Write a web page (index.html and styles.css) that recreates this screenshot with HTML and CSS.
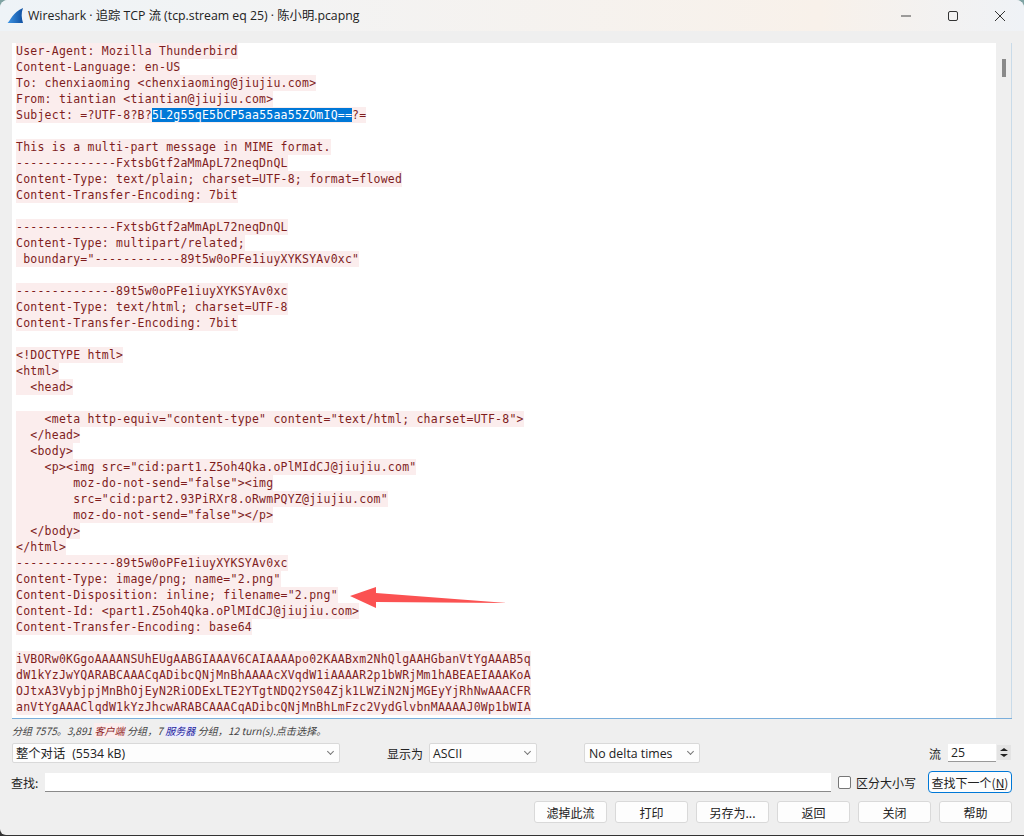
FILE: index.html
```html
<!DOCTYPE html>
<html lang="zh-CN">

<head>
    <meta charset="UTF-8">
    <title>Wireshark · 追踪 TCP 流 (tcp.stream eq 25) · 陈小明.pcapng</title>
    <link rel="stylesheet" href="styles.css">
</head>

<body>
    <div class="window">
        <div class="titlebar">
            <svg class="logo" width="16" height="15" viewBox="0 0 16 15">
                <defs>
                    <linearGradient id="fin" x1="0" y1="0" x2="1" y2="0">
                        <stop offset="0" stop-color="#3f96e6" />
                        <stop offset="1" stop-color="#0e4fa0" />
                    </linearGradient>
                </defs>
                <path d="M0.500 15C3 13 6 4 16 0C14 5 14.500 10 16 15Z" fill="url(#fin)" />
            </svg>
            <span class="title">Wireshark · 追踪 TCP 流 (tcp.stream eq 25) · 陈小明.pcapng</span>
            <div class="win-btns">
                <svg width="12" height="12" viewBox="0 0 12 12"><path d="M1 6H11" stroke="#444" /></svg>
                <svg width="12" height="12" viewBox="0 0 12 12"><rect x="1.500" y="1.500" width="9" height="9" rx="1.500" fill="none" stroke="#333" /></svg>
                <svg width="12" height="12" viewBox="0 0 12 12"><path d="M1 1L11 11M11 1L1 11" stroke="#333" /></svg>
            </div>
        </div>

        <div class="stream">
            <div class="text">
                <div><span>User-Agent: Mozilla Thunderbird</span></div>
                <div><span>Content-Language: en-US</span></div>
                <div><span>To: chenxiaoming &lt;chenxiaoming@jiujiu.com&gt;</span></div>
                <div><span>From: tiantian &lt;tiantian@jiujiu.com&gt;</span></div>
                <div><span>Subject: =?UTF-8?B?<em>5L2g55qE5bCP5aa55aa55ZOmIQ==</em>?=</span></div>
                <div></div>
                <div><span>This is a multi-part message in MIME format.</span></div>
                <div><span>--------------FxtsbGtf2aMmApL72neqDnQL</span></div>
                <div><span>Content-Type: text/plain; charset=UTF-8; format=flowed</span></div>
                <div><span>Content-Transfer-Encoding: 7bit</span></div>
                <div></div>
                <div><span>--------------FxtsbGtf2aMmApL72neqDnQL</span></div>
                <div><span>Content-Type: multipart/related;</span></div>
                <div><span> boundary="------------89t5w0oPFe1iuyXYKSYAv0xc"</span></div>
                <div></div>
                <div><span>--------------89t5w0oPFe1iuyXYKSYAv0xc</span></div>
                <div><span>Content-Type: text/html; charset=UTF-8</span></div>
                <div><span>Content-Transfer-Encoding: 7bit</span></div>
                <div></div>
                <div><span>&lt;!DOCTYPE html&gt;</span></div>
                <div><span>&lt;html&gt;</span></div>
                <div><span>  &lt;head&gt;</span></div>
                <div></div>
                <div><span>    &lt;meta http-equiv="content-type" content="text/html; charset=UTF-8"&gt;</span></div>
                <div><span>  &lt;/head&gt;</span></div>
                <div><span>  &lt;body&gt;</span></div>
                <div><span>    &lt;p&gt;&lt;img src="cid:part1.Z5oh4Qka.oPlMIdCJ@jiujiu.com"</span></div>
                <div><span>        moz-do-not-send="false"&gt;&lt;img</span></div>
                <div><span>        src="cid:part2.93PiRXr8.oRwmPQYZ@jiujiu.com"</span></div>
                <div><span>        moz-do-not-send="false"&gt;&lt;/p&gt;</span></div>
                <div><span>  &lt;/body&gt;</span></div>
                <div><span>&lt;/html&gt;</span></div>
                <div><span>--------------89t5w0oPFe1iuyXYKSYAv0xc</span></div>
                <div><span>Content-Type: image/png; name="2.png"</span></div>
                <div><span>Content-Disposition: inline; filename="2.png"</span></div>
                <div><span>Content-Id: &lt;part1.Z5oh4Qka.oPlMIdCJ@jiujiu.com&gt;</span></div>
                <div><span>Content-Transfer-Encoding: base64</span></div>
                <div></div>
                <div><span>iVBORw0KGgoAAAANSUhEUgAABGIAAAV6CAIAAAApo02KAABxm2NhQlgAAHGbanVtYgAAAB5q</span></div>
                <div><span>dW1kYzJwYQARABCAAACqADibcQNjMnBhAAAAcXVqdW1iAAAAR2p1bWRjMm1hABEAEIAAAKoA</span></div>
                <div><span>OJtxA3VybjpjMnBhOjEyN2RiODExLTE2YTgtNDQ2YS04Zjk1LWZiN2NjMGEyYjRhNwAAACFR</span></div>
                <div><span>anVtYgAAAClqdW1kYzJhcwARABCAAACqADibcQNjMnBhLmFzc2VydGlvbnMAAAAJ0Wp1bWIA</span></div>
            </div>
            <div class="scrollbar">
                <div class="thumb"></div>
            </div>
        </div>

        <div class="info">分组 7575。3,891 <b class="client">客户端</b> 分组，7 <b class="server">服务器</b> 分组，12 turn(s).点击选择。</div>

        <div class="row row-show">
            <div class="select select-conv">整个对话<span class="size">(5534 kB)</span><i class="caret"></i></div>
            <label class="label-show">显示为</label>
            <div class="select select-ascii">ASCII<i class="caret"></i></div>
            <div class="select select-delta">No delta times<i class="caret"></i></div>
            <label class="label-stream">流</label>
            <div class="spin">
                <div class="spin-val">25</div>
                <div class="spin-btns">
                    <div class="up"></div>
                    <div class="down"></div>
                </div>
            </div>
        </div>

        <div class="row row-find">
            <label>查找:</label>
            <div class="find-input"></div>
            <div class="check"></div>
            <label class="label-case">区分大小写</label>
            <button class="btn btn-next" type="button">查找下一个(<u>N</u>)</button>
        </div>

        <div class="row row-actions">
            <button class="btn" type="button">滤掉此流</button>
            <button class="btn" type="button">打印</button>
            <button class="btn" type="button">另存为...</button>
            <button class="btn" type="button">返回</button>
            <button class="btn" type="button">关闭</button>
            <button class="btn" type="button">帮助</button>
        </div>

        <svg class="arrow" width="160" height="24" viewBox="0 0 160 24">
            <path d="M0 10L26 1L26 7L157 17L26 16L26 22Z" fill="#fb5252" />
        </svg>
    </div>
</body>

</html>
```

FILE: styles.css
```css
* {
    box-sizing: border-box;
}

html,
body {
    margin: 0;
    height: 100%;
}

body {
    background: linear-gradient(#7fa3a3 0, #7fa3a3 40px, #333 800px);
    font-family: "Noto Sans CJK SC", "Open Sans", sans-serif;
    font-size: 12px;
    color: #222;
    overflow: hidden;
}

.window {
    position: relative;
    width: 1024px;
    height: 835px;
    background-color: #efefef;
    border-radius: 8px 8px 0 6px;
    overflow: hidden;
    display: flex;
    flex-direction: column;
}

.titlebar {
    height: 31px;
    flex: none;
    display: flex;
    align-items: center;
    padding-left: 7px;
    background: linear-gradient(90deg, #eef3f7 0%, #f3f3f3 30%, #f8f1ea 80%, #eff2f6 100%);

    .logo {
        margin-right: 5px;
    }

    .title {
        position: relative;
        top: -1px;
        font-family: "Open Sans", "Noto Sans CJK SC", sans-serif;
        font-size: 12.3px;
        color: #222;
    }

    .win-btns {
        margin-left: auto;
        display: flex;
        gap: 35px;
        padding-right: 18px;
    }
}

.stream {
    height: 676px;
    margin: 12px 12px 0 12px;
    flex: none;
    display: flex;
    background-color: #fff;
    border-bottom: 1px solid #7aaedb;
}

.text {
    flex: 1;
    min-width: 0;
    padding-left: 4px;
    font-family: "DejaVu Sans Mono", monospace;
    font-size: 11.5px;
    line-height: 16px;
    letter-spacing: 0.227px;
    color: #7f1d1d;
    overflow: hidden;

    & div {
        height: 16px;
    }

    & span {
        display: inline-block;
        height: 16px;
        white-space: pre;
        background-color: #fbeded;
    }

    & em {
        font-style: normal;
        color: #fff;
        background-color: #0078d7;
    }
}

.scrollbar {
    width: 16px;
    flex: none;
    background-color: #efefef;
    border-right: 1px solid #c9dbe9;
    padding: 16px 5px 0 6px;

    .thumb {
        height: 18px;
        background-color: #8a8a8a;
    }
}

.info {
    height: 23px;
    flex: none;
    padding: 4px 0 0 12px;
    font-size: 10.1px;
    font-style: italic;
    line-height: 16px;
    color: #444;

    & b {
        font-weight: normal;
    }

    .client {
        color: #8f1d1d;
        background-color: #fbeded;
    }

    .server {
        color: #1d1d9f;
        background-color: #ededfb;
    }
}

.row {
    flex: none;
    display: flex;
    align-items: center;
}

.row-show {
    height: 20px;
    margin-top: 1px;
    padding-left: 12px;
}

.select {
    position: relative;
    height: 20px;
    line-height: 20px;
    padding-left: 4px;
    background-color: #fdfdfd;
    border: 1px solid #d9d9d9;
    border-radius: 2px;
    white-space: pre;
    font-family: "Open Sans", "Noto Sans CJK SC", sans-serif;
    font-size: 12.3px;
}

.caret {
    position: absolute;
    right: 6px;
    top: 5px;
    width: 5px;
    height: 5px;
    border-right: 1px solid #777;
    border-bottom: 1px solid #777;
    transform: rotate(45deg);
}

.select-conv {
    width: 328px;
    padding-left: 3px;

    .size {
        margin-left: 7px;
    }
}

.label-show {
    margin-left: 47px;
    width: 42px;
}

.select-ascii {
    width: 108px;
    padding-left: 3px;
}

.select-delta {
    margin-left: 47px;
    width: 116px;
}

.label-stream {
    margin-left: 229px;
    width: 19px;
}

.spin {
    width: 64px;
    height: 20px;
    display: flex;

    .spin-val {
        width: 48px;
        height: 18px;
        margin-top: 1px;
        padding-left: 3px;
        line-height: 17px;
        background-color: #fff;
        border-bottom: 1px solid #999;
        font-family: "Open Sans", sans-serif;
        font-size: 12.3px;
    }

    .spin-btns {
        width: 14px;
        height: 15px;
        margin: 2px 0 0 1px;
        background-color: #e4e4e4;
        display: flex;
        flex-direction: column;
        align-items: center;
        justify-content: space-around;
        padding: 1px 0;
    }

    .up {
        border: 4px solid transparent;
        border-top: 0;
        border-bottom: 3px solid #222;
    }

    .down {
        border: 4px solid transparent;
        border-bottom: 0;
        border-top: 3px solid #222;
    }
}

.row-find {
    height: 22px;
    margin-top: 8px;
    padding-left: 11px;

    & label {
        width: 34px;
    }

    .find-input {
        width: 786px;
        height: 19px;
        background-color: #fff;
        border-bottom: 1px solid #8a8a8a;
    }

    .check {
        width: 13px;
        height: 13px;
        margin-left: 7px;
        background-color: #fff;
        border: 1px solid #777;
        border-radius: 2px;
    }

    .label-case {
        width: 72px;
        margin-left: 5px;
    }
}

.btn {
    height: 22px;
    padding: 0;
    background-color: #fdfdfd;
    border: 1px solid #d9d9d9;
    border-radius: 3px;
    font-family: "Noto Sans CJK SC", sans-serif;
    font-size: 12px;
    color: #222;
}

.btn-next {
    width: 84px;
    border-color: #0078d7;
    border-radius: 4px;
    white-space: nowrap;
}

.row-actions {
    height: 22px;
    margin-top: 8px;
    padding-left: 534px;
    gap: 8px;

    .btn {
        width: 73px;
    }
}

.arrow {
    position: absolute;
    left: 350px;
    top: 586px;
}
```
